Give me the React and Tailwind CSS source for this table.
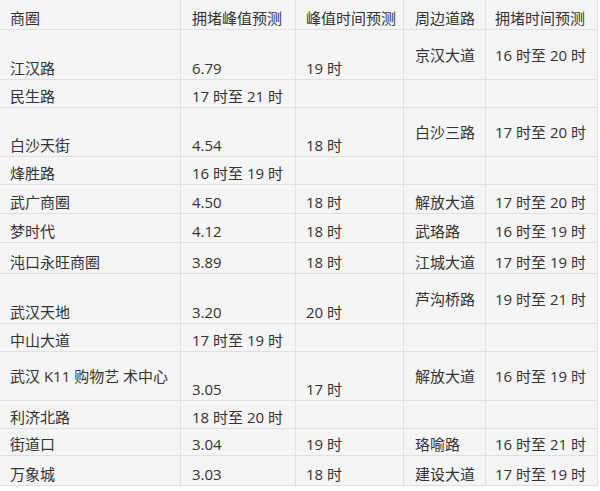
import React from 'react';

// tall: first three columns sit at the bottom, the road columns are centred
const rows = [
    { tall: true, c: ['江汉路', '6.79', '19 时', '京汉大道', '16 时至 20 时'] },
    { c: ['民生路', '17 时至 21 时', '', '', ''] },
    { tall: true, c: ['白沙天街', '4.54', '18 时', '白沙三路', '17 时至 20 时'] },
    { c: ['烽胜路', '16 时至 19 时', '', '', ''] },
    { c: ['武广商圈', '4.50', '18 时', '解放大道', '17 时至 20 时'] },
    { c: ['梦时代', '4.12', '18 时', '武珞路', '16 时至 19 时'] },
    { c: ['沌口永旺商圈', '3.89', '18 时', '江城大道', '17 时至 19 时'] },
    { tall: true, c: ['武汉天地', '3.20', '20 时', '芦沟桥路', '19 时至 21 时'] },
    { c: ['中山大道', '17 时至 19 时', '', '', ''] },
    { tall: true, mid: true, c: ['武汉 K11 购物艺 术中心', '3.05', '17 时', '解放大道', '16 时至 19 时'] },
    { c: ['利济北路', '18 时至 20 时', '', '', ''] },
    { c: ['街道口', '3.04', '19 时', '珞喻路', '16 时至 21 时'] },
    { c: ['万象城', '3.03', '18 时', '建设大道', '17 时至 19 时'] },
];

const header = ['商圈', '拥堵峰值预测', '峰值时间预测', '周边道路', '拥堵时间预测'];
const pads = ['pl-[10px]', 'pl-[11px]', 'pl-[10px]', 'pl-[11px]', 'pl-[9px]'];

const Cell = ({ children, col, center }) => (
    <div className={`bg-[#f5f5f5] flex ${center ? 'items-center' : 'items-end pb-[1px]'} ${pads[col]} whitespace-nowrap`}>
        <span className="leading-[20px]">{children}</span>
    </div>
);

const App = () => {
    return (
        <div className="w-[600px] h-[491px] bg-white overflow-hidden text-[15px] text-[#333]" style={{ fontFamily: '"Open Sans", "Noto Sans CJK SC", sans-serif' }}>
            <div className="w-[598px] bg-[#e0e0e0] pr-px pb-px">
                <div className="grid grid-cols-[180px_114px_107px_81px_111px] grid-rows-[29px_49px_27px_48px_27px_28px_28px_30px_49px_27px_48px_27px_26px_29px] gap-px">
                    {header.map((h, i) => (
                        <Cell key={'h' + i} col={i}>{h}</Cell>
                    ))}
                    {rows.map((r, ri) =>
                        r.c.map((v, ci) => (
                            <Cell
                                key={ri + '-' + ci}
                                col={ci}
                                center={r.tall && (ci > 2 || (r.mid && ci === 0))}
                            >
                                {v}
                            </Cell>
                        ))
                    )}
                </div>
            </div>
        </div>
    );
};

export default App;
